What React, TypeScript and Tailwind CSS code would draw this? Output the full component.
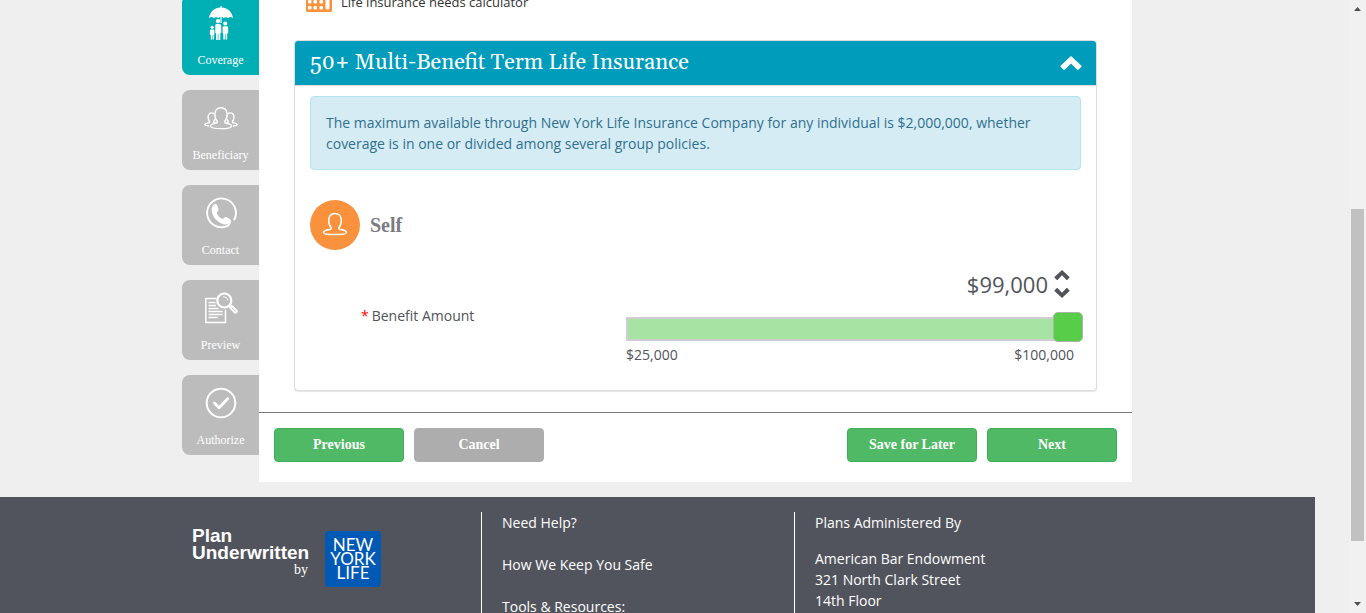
import { useState, type ReactNode } from "react";

const SANS = "font-['Open_Sans','Noto_Sans',sans-serif]";

function CoverageIcon() {
  return (
    <svg width="24" height="34" viewBox="0 0 24 34" fill="currentColor" aria-hidden="true">
      <path d="M11.400 1.500V0h1.200v1.500C19 1.900 23.600 6.500 24 12.300c-1.300-1.500-3.300-1.600-4.700-.2-1.300-1.300-3.400-1.300-4.700 0-.6-.6-1.200-.9-2-1V17h-1.200v-5.900c-.8.1-1.400.4-2 1-1.300-1.300-3.400-1.300-4.700 0-1.400-1.400-3.400-1.300-4.700.2C.4 6.500 5 1.900 11.400 1.500z" />
      <circle cx="9" cy="15.200" r="2.100" />
      <circle cx="16.200" cy="17.600" r="2" />
      <circle cx="3.200" cy="21.300" r="1.600" />
      <path d="M7 18h4l1.200 1.200V27l-.9.300V34H9.400v-6h-.6v6H7v-6.700l-.7-.3v-8z" />
      <path d="M14.400 20.200h3.700c.8.400 1.100 1 1.100 1.800V27l-1 .5V33.500h-1.700V28h-.6v5.500h-1.600v-6l-.7-.5v-5.800z" />
      <path d="M2 23.500h2.600l.8.800v4.500l-.6.300V33.500H3.600v-4h-.5v4H1.800v-4.400l-.9-.5v-3.900c0-.6.4-1.200 1.100-1.200z" />
    </svg>
  );
}

function BeneficiaryIcon() {
  return (
    <svg width="34" height="24" viewBox="0 0 34 24" fill="none" stroke="currentColor" strokeWidth="1.400" strokeLinecap="round" strokeLinejoin="round" aria-hidden="true">
      <path d="M13.200 15.300c-1.500-1.400-2.300-4-2.300-6.700 0-4.300 2.400-6.900 6.100-6.900s6.100 2.600 6.100 6.900c0 2.700-.8 5.300-2.300 6.700-.4 1.200.3 1.800 1.700 2.100 3 .6 5 1.300 5 2.500 0 1.500-4.200 2.700-10.500 2.700S6.500 21.400 6.500 19.900c0-1.200 2-1.900 5-2.500 1.400-.3 2.100-.9 1.700-2.100z" />
      <path d="M9.800 7.600c-.6-.5-1.300-.7-2.100-.7-2.200 0-3.600 1.700-3.600 4.400 0 1.700.5 3.200 1.400 4.200.3.800-.2 1.200-1.200 1.400-2 .4-3.500.8-3.500 1.700 0 .7 1.500 1.200 3.800 1.400M10.700 13.500c-.2.800-.5 1.400-.9 2-.3.800.1 1.100 1 1.300" />
      <path d="M24.200 7.600c.6-.5 1.300-.7 2.100-.7 2.200 0 3.600 1.700 3.600 4.400 0 1.700-.5 3.200-1.400 4.200-.3.800.2 1.200 1.200 1.400 2 .4 3.500.8 3.500 1.700 0 .7-1.500 1.200-3.800 1.400M23.300 13.500c.2.800.5 1.400.9 2 .3.800-.1 1.100-1 1.300" />
    </svg>
  );
}

function ContactIcon() {
  return (
    <svg width="32" height="32" viewBox="0 0 32 32" aria-hidden="true">
      <path d="M29.300 22.500A14.400 14.400 0 1 0 20.500 29.700c3-.8 4.300-2.700 4.500-5.200" fill="none" stroke="currentColor" strokeWidth="1.900" strokeLinecap="round" />
      <path d="M8.800 7.500c1.600-1 3-.4 3.600 1.200l1 2.900c.4 1.400 0 2.300-1 3.100-.7.600-.7 1.200-.3 2 1.100 2.200 2.700 3.900 4.900 4.900.8.400 1.400.2 2-.6.8-1.100 1.900-1.300 3.100-.6l2.600 1.700c1.300.9 1.400 2.300.3 3.500-1.500 1.700-4 2.400-6.600 1.600-5.400-1.600-9.700-6-11.300-11.500-.9-3.400-.5-6.600 1.700-8.200z" fill="currentColor" />
    </svg>
  );
}

function PreviewIcon() {
  return (
    <svg width="34" height="32" viewBox="0 0 34 32" fill="none" stroke="currentColor" aria-hidden="true">
      <path d="M12.500 6.500H1.800v24h19.700V17.500" strokeWidth="1.500" />
      <path d="M4.500 10.500h7M4.500 13.500h7.500M4.500 16.500h10M4.500 19.500h14M4.500 22.500h14M4.500 25.500h9.500" strokeWidth="1.300" />
      <circle cx="20.300" cy="8.500" r="7" strokeWidth="2.200" />
      <path d="M19.500 4.800c2.400 0 4 1.400 4.400 3.600" strokeWidth="1" strokeLinecap="round" />
      <path d="M25.500 13.500l1.500 1.300" strokeWidth="2.500" />
      <path d="M27.300 15.200l4.300 4.100" strokeWidth="4.400" strokeLinecap="round" />
      <path d="M28 15.900l3.300 3.100" stroke="#bcbcbc" strokeWidth="1" strokeLinecap="round" />
    </svg>
  );
}

function AuthorizeIcon() {
  return (
    <svg width="32" height="32" viewBox="0 0 32 32" fill="none" stroke="currentColor" strokeLinecap="round" strokeLinejoin="round" aria-hidden="true">
      <circle cx="16" cy="16" r="14.300" strokeWidth="2" />
      <path d="M9.300 16l4.700 4.700 8.700-9" strokeWidth="2.800" />
    </svg>
  );
}

function PersonIcon() {
  return (
    <svg width="26" height="26" viewBox="0 0 26 26" fill="none" stroke="currentColor" strokeWidth="1.500" strokeLinejoin="round" aria-hidden="true">
      <path d="M9.200 15.700C7.500 14 6.700 11.300 6.700 8.300 6.700 4.200 9.200 1.500 13 1.500s6.300 2.700 6.300 6.800c0 3-.8 5.700-2.500 7.400-.4 1.100.3 1.600 1.700 1.800 3.900.6 6 1.500 6 2.900 0 1.600-4.500 2.200-11.500 2.200S1.500 22 1.500 20.400c0-1.400 2.100-2.300 6-2.900 1.400-.2 2.100-.7 1.700-1.800z" />
    </svg>
  );
}

function CalculatorIcon() {
  return (
    <svg width="26" height="30" viewBox="0 0 26 30" aria-hidden="true">
      <rect width="26" height="30" rx="1.500" fill="#fa923d" />
      <g fill="#fff">
        <rect x="2" y="3" width="22" height="8" rx="1" />
        <rect x="2" y="13" width="3.500" height="3" rx="1" />
        <rect x="7.500" y="13" width="3.500" height="3" rx="1" />
        <rect x="13.500" y="13" width="3.500" height="3" rx="1" />
        <rect x="2" y="18" width="3.500" height="3.500" rx="1" />
        <rect x="7.500" y="18" width="3.500" height="3.500" rx="1" />
        <rect x="13.500" y="18" width="3.500" height="3.500" rx="1" />
        <rect x="2" y="24" width="3.500" height="3.500" rx="1" />
        <rect x="7.500" y="24" width="3.500" height="3.500" rx="1" />
        <rect x="13.500" y="24" width="3.500" height="3.500" rx="1" />
        <rect x="19.500" y="13" width="4" height="14.500" rx="1.500" />
      </g>
    </svg>
  );
}

function Chevron({ down = false, size }: { down?: boolean; size: "sm" | "lg" }) {
  return (
    <svg className={size === "lg" ? "h-3.5 w-[22px]" : "h-2.5 w-4"} viewBox="0 0 22 14" fill="currentColor" aria-hidden="true">
      <path
        d={
          down
            ? "M11 14L.8 4.600Q0 3.800.8 3L3.400.4Q4.200-.2 5 .5L11 6.500 17 .5Q17.800-.2 18.600.4L21.200 3Q22 3.800 21.200 4.600z"
            : "M11 0L.8 9.400Q0 10.200.8 11L3.400 13.600Q4.200 14.200 5 13.500L11 7.500 17 13.500Q17.800 14.200 18.600 13.600L21.200 11Q22 10.200 21.200 9.400z"
        }
      />
    </svg>
  );
}

const steps: { label: string; icon: ReactNode; active?: boolean }[] = [
  { label: "Coverage", icon: <CoverageIcon />, active: true },
  { label: "Beneficiary", icon: <BeneficiaryIcon /> },
  { label: "Contact", icon: <ContactIcon /> },
  { label: "Preview", icon: <PreviewIcon /> },
  { label: "Authorize", icon: <AuthorizeIcon /> },
];

function StepNav() {
  return (
    <nav aria-label="Application steps" className="-mt-[5px] flex w-[77px] shrink-0 flex-col gap-[15px]">
      {steps.map((s) => (
        <a
          key={s.label}
          href={"#" + s.label.toLowerCase()}
          className={
            "flex h-20 flex-col items-center rounded-l-lg font-['Liberation_Serif',serif] text-xs leading-[18px] text-white " +
            (s.active ? "bg-[#00afb3]" : "bg-[#bcbcbc]")
          }
        >
          <span className="flex h-14 items-center">{s.icon}</span>
          {s.label}
        </a>
      ))}
    </nav>
  );
}

function ActionButton({ children, muted = false }: { children: ReactNode; muted?: boolean }) {
  return (
    <button
      type="button"
      className={
        "h-[34px] w-[130px] rounded border font-['Liberation_Serif',serif] text-sm font-bold text-white " +
        (muted ? "border-[#adadad] bg-[#adadad]" : "border-[#3fae57] bg-[#4fb965]")
      }
    >
      {children}
    </button>
  );
}

const MIN = 25000;
const MAX = 100000;
const usd = (n: number) => "$" + n.toLocaleString("en-US");

function BenefitAmount() {
  const [amount, setAmount] = useState(99000);
  const change = (d: number) => setAmount((a) => Math.min(MAX, Math.max(MIN, a + d)));
  return (
    <div className="mt-4 flex items-start pr-[7px]">
      <label htmlFor="benefit" className="mt-[39px] flex flex-1 gap-[3px] pl-[51px] text-[14px] leading-[21px] text-[#50535a]">
        <span className="text-[#f00]">*</span>
        Benefit Amount
      </label>
      <div className="w-[448px]">
        <div className="flex items-center justify-end gap-1.5 pr-1 text-[#50535a]">
          <output htmlFor="benefit" className="text-[22px] leading-9">{usd(amount)}</output>
          <div className="flex flex-col gap-2">
            <button type="button" aria-label="Increase" onClick={() => change(1000)}>
              <Chevron size="sm" />
            </button>
            <button type="button" aria-label="Decrease" onClick={() => change(-1000)}>
              <Chevron size="sm" down />
            </button>
          </div>
        </div>
        <div className="mt-2.5 grid items-center">
          <div className="col-start-1 row-start-1 mt-[3px] h-6 border-2 border-[#cfcdcf] bg-[#e9e9e9]">
            <div className="h-full bg-[#a7e3a2]" style={{ width: ((amount - MIN) / (MAX - MIN)) * 100 + "%" }} />
          </div>
          <input
            id="benefit"
            type="range"
            min={MIN}
            max={MAX}
            step={1000}
            value={amount}
            onChange={(e) => setAmount(Number(e.target.value))}
            className="col-start-1 row-start-1 -mx-[15px] h-[30px] cursor-pointer appearance-none bg-transparent [&::-webkit-slider-thumb]:size-[30px] [&::-webkit-slider-thumb]:appearance-none [&::-webkit-slider-thumb]:rounded-[5px] [&::-webkit-slider-thumb]:border [&::-webkit-slider-thumb]:border-solid [&::-webkit-slider-thumb]:border-[#a9b5a8] [&::-webkit-slider-thumb]:bg-[#57cd4a]"
          />
        </div>
        <div className="mt-0.5 flex justify-between text-[14px] leading-[21px] text-[#50535a]">
          <span>{usd(MIN)}</span>
          <span>{usd(MAX)}</span>
        </div>
      </div>
    </div>
  );
}

function PlanCard() {
  return (
    <section className="rounded border border-[#ddd] bg-white pb-[25px] shadow-[0_1px_1px_rgba(0,0,0,0.1)]">
      <header className="flex h-[45px] items-center justify-between rounded-t-[3px] border-b border-[#ddd] bg-[#009cbc] pr-[14px] pl-[15px] text-white">
        <h2 className="font-['Georgia','Gelasio','Liberation_Serif',serif] text-[22px]">50+ Multi-Benefit Term Life Insurance</h2>
        <button type="button" aria-label="Collapse">
          <Chevron size="lg" />
        </button>
      </header>
      <div className="px-[15px] pt-2.5">
        <p className="rounded border border-[#b3e5ef] bg-[#d6ecf5] p-[15px] text-[14px] leading-[21px] text-[#2f708d]">
          The maximum available through New York Life Insurance Company for any individual is $2,000,000, whether coverage is in one or divided among several group policies.
        </p>
        <div className="mt-[30px] flex items-center gap-2.5">
          <span className="flex size-[50px] items-center justify-center rounded-full bg-[#fa923d] text-white">
            <PersonIcon />
          </span>
          <h3 className="font-['Liberation_Serif',serif] text-xl font-bold text-[#7c7b83]">Self</h3>
        </div>
        <BenefitAmount />
      </div>
    </section>
  );
}

function Footer() {
  return (
    <footer className="flex-1 bg-[#51545c] pt-[15px] text-[14px] leading-[21px] text-white">
      <div className="mx-auto flex h-full max-w-[951px]">
        <div className="flex w-[299px] items-start pt-[15px] pl-2.5">
          <div className="w-[116px] text-right">
            <p className="text-left font-['Liberation_Sans',sans-serif] text-[19px] leading-[17px] font-bold">Plan Underwritten</p>
            <p className="font-['Liberation_Serif',serif] text-sm leading-[18px]">by</p>
          </div>
          <div className="mt-1 ml-[17px] flex size-14 flex-col justify-center rounded-sm bg-[#0059b5] text-center font-['Lato',sans-serif] text-[17px] leading-[14px]">
            <span>NEW</span>
            <span>YORK</span>
            <span>LIFE</span>
          </div>
        </div>
        <ul className="flex w-[313px] flex-col gap-[21px] border-l border-white pl-5">
          <li><a href="#help">Need Help?</a></li>
          <li><a href="#safe">How We Keep You Safe</a></li>
          <li>Tools &amp; Resources:</li>
        </ul>
        <div className="flex-1 border-l border-white pl-5">
          <p className="mb-[15px]">Plans Administered By</p>
          <address className="not-italic">
            American Bar Endowment<br />
            321 North Clark Street<br />
            14th Floor
          </address>
        </div>
      </div>
    </footer>
  );
}

function ScrollRail() {
  return (
    <div aria-hidden="true" className="flex h-full w-[17px] shrink-0 flex-col items-center bg-[#f1f1f1] py-[7px] text-[#505050]">
      <svg width="7" height="4" viewBox="0 0 7 4" fill="currentColor"><path d="M0 4L3.500 0 7 4z" /></svg>
      <div className="flex w-[13px] flex-1 flex-col">
        <div className="flex-[198]" />
        <div className="flex-[332] bg-[#c1c1c1]" />
        <div className="flex-[61]" />
      </div>
      <svg width="7" height="4" viewBox="0 0 7 4" fill="currentColor"><path d="M0 0L3.500 4 7 0z" /></svg>
    </div>
  );
}

export default function App() {
  return (
    <div className={"flex h-screen overflow-hidden bg-[#efefef] " + SANS}>
      <div className="flex min-w-0 flex-1 flex-col pr-[34px]">
        <div className="mx-auto flex w-full max-w-[951px] pr-px">
          <StepNav />
          <main className="min-w-0 flex-1 bg-white pb-5">
            <div className="px-[35px]">
              <a href="#calculator" className="-mt-[18px] mb-7 ml-3 flex h-[30px] items-center gap-[9px] text-[13px] text-[#333]">
                <CalculatorIcon />
                <span className="pt-3">Life insurance needs calculator</span>
              </a>
              <PlanCard />
            </div>
            <div className="mt-[21px] flex justify-between border-t border-[#77787b] px-[15px] pt-[15px]">
              <div className="flex gap-2.5">
                <ActionButton>Previous</ActionButton>
                <ActionButton muted>Cancel</ActionButton>
              </div>
              <div className="flex gap-2.5">
                <ActionButton>Save for Later</ActionButton>
                <ActionButton>Next</ActionButton>
              </div>
            </div>
          </main>
        </div>
        <div className="mt-[15px] flex flex-1">
          <Footer />
        </div>
      </div>
      <ScrollRail />
    </div>
  );
}
